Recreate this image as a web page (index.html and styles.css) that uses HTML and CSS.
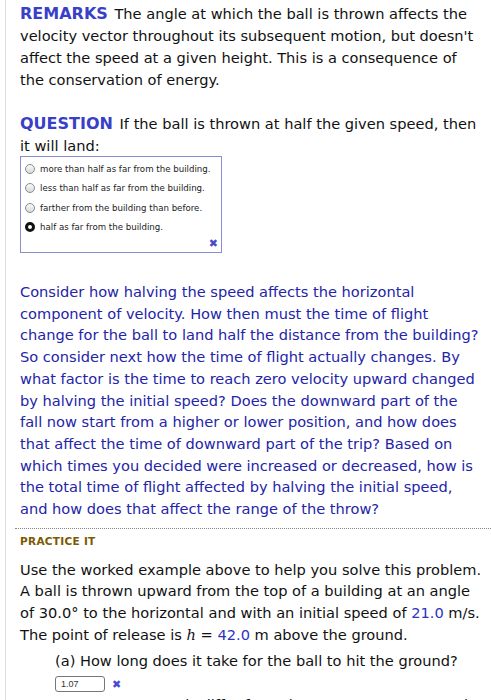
FILE: index.html
```html
<!DOCTYPE html>
<html lang="en">
<head>
    <meta charset="UTF-8">
    <meta name="viewport" content="width=device-width, initial-scale=1.0">
    <title>Projectile from a building</title>
    <link rel="stylesheet" href="styles.css">
</head>
<body>

    <div class="sheet">

        <p class="remarks"><span class="label">REMARKS</span> The angle at which the ball is thrown affects the velocity vector throughout its subsequent motion, but doesn't affect the speed at a given height. This is a consequence of the conservation of energy.</p>

        <p class="question"><span class="label">QUESTION</span> If the ball is thrown at half the given speed, then it will land:</p>

        <div class="choices">
            <label class="choice"><span class="radio"></span>more than half as far from the building.</label>
            <label class="choice"><span class="radio"></span>less than half as far from the building.</label>
            <label class="choice"><span class="radio"></span>farther from the building than before.</label>
            <label class="choice"><span class="radio checked"></span>half as far from the building.</label>
            <div class="choices-mark"><span class="wrong">&#x2716;</span></div>
        </div>

        <p class="hint">Consider how halving the speed affects the horizontal component of velocity. How then must the time of flight change for the ball to land half the distance from the building? So consider next how the time of flight actually changes. By what factor is the time to reach zero velocity upward changed by halving the initial speed? Does the downward part of the fall now start from a higher or lower position, and how does that affect the time of downward part of the trip? Based on which times you decided were increased or decreased, how is the total time of flight affected by halving the initial speed, and how does that affect the range of the throw?</p>

        <div class="practice">
            <div class="practice-title">PRACTICE IT</div>
            <p class="practice-text">Use the worked example above to help you solve this problem. A ball is thrown upward from the top of a building at an angle of 30.0&deg; to the horizontal and with an initial speed of <span class="given">21.0</span> m/s. The point of release is <i class="var">h</i> = <span class="given">42.0</span> m above the ground.</p>

            <div class="part">
                <p class="part-q">(a) How long does it take for the ball to hit the ground?</p>
                <div class="answer">
                    <span class="answer-box">1.07</span>
                    <span class="wrong">&#x2716;</span>
                </div>
                <p class="part-q part-next">How many seconds differ from the answer you expected?</p>
            </div>
        </div>

    </div>

</body>
</html>
```

FILE: styles.css
```css
body {
    margin: 0;
    background: #fff;
    color: #111;
    font-family: 'DejaVu Sans', Verdana, sans-serif;
    overflow: hidden;
    height: 700px;
}

.sheet {
    margin-left: 5px;
    border-left: 1px solid #dcdcdc;
    padding: 3px 9px 0 14px;
    min-height: 700px;
}

p {
    margin: 0;
}

.remarks,
.question,
.hint,
.practice-text,
.part-q {
    font-size: 14.6px;
    line-height: 21.7px;
}

.remarks,
.question {
    line-height: 22px;
}

.label {
    font-weight: bold;
    color: #3a3fc8;
    margin-right: 2px;
    font-size: 16px;
}

.remarks {
    margin-bottom: 22px;
}

/* answer choices */
.choices {
    width: 202px;
    border: 1px solid #8c8cd0;
    padding: 2px 0 0 4px;
    box-sizing: border-box;
    height: 97px;
    margin-top: -1px;
}

.choice {
    display: flex;
    align-items: center;
    gap: 5px;
    font-size: 8.65px;
    height: 19.5px;
    color: #222;
}

.radio {
    width: 10px;
    height: 10px;
    border-radius: 50%;
    border: 1px solid #8a8a8a;
    background: linear-gradient(#fafafa, #d8d8d8);
    box-sizing: border-box;
    flex-shrink: 0;
}

.radio.checked {
    border: 3px solid #111;
    background: #fff;
}

.choices-mark {
    display: flex;
    justify-content: flex-end;
    padding-right: 3px;
}

.wrong {
    color: #4a4ad0;
    font-size: 11px;
    font-weight: bold;
}

.hint {
    color: #2424a8;
    margin-top: 28px;
}

/* practice block */
.practice {
    margin-top: 8px;
    margin-left: -5px;
    margin-right: -9px;
    border-top: 1px dotted #888;
    padding: 6px 0 0 5px;
}

.practice-title {
    font-size: 10.5px;
    font-weight: bold;
    color: #7a5a00;
    letter-spacing: 0.3px;
    margin-bottom: 12px;
}

.practice-text {
    margin-right: 9px;
}

.given {
    color: #2e33c2;
}

.var {
    font-family: 'DejaVu Serif', serif;
}

.part {
    padding-left: 35px;
    margin-top: 4px;
}

.answer {
    display: flex;
    align-items: center;
    gap: 7px;
    margin: 5px 0 0;
}

.answer-box {
    width: 50px;
    height: 16px;
    border: 1px solid #777;
    border-radius: 3px;
    box-sizing: border-box;
    font-family: 'Liberation Sans', Arial, sans-serif;
    font-size: 9px;
    line-height: 14px;
    padding-left: 5px;
    color: #333;
}

.part-next {
    margin-top: 2px;
}
```
